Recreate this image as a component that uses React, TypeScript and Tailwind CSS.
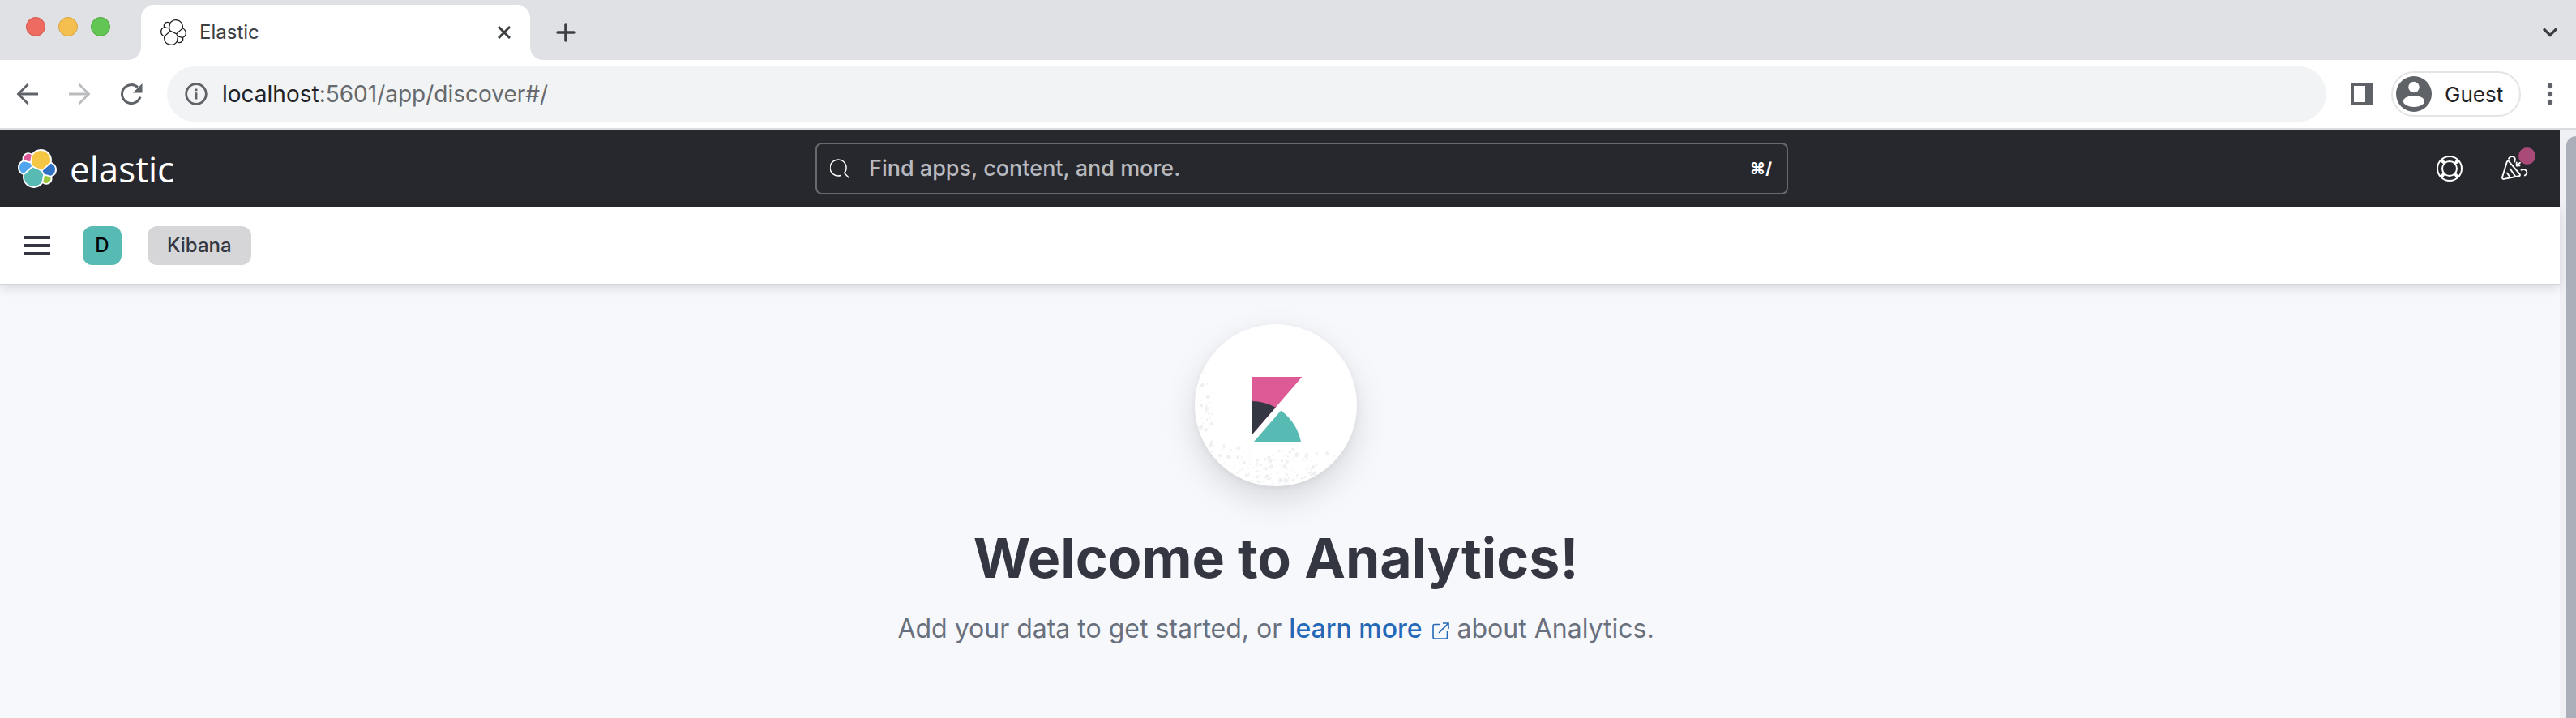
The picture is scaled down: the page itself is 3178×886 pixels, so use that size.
import React from "react";

type LogoProps = { className: string; mono?: boolean };

const LOGO_PARTS: { d: string; fill: string }[] = [
  { fill: "#f4c644", d: "M12.58 13.79l7 3.2 7.05-6.2c.1-.5.15-1.01.15-1.56a7.9 7.9 0 00-14.42-4.45l-1.17 6.1 1.39 2.91" },
  { fill: "#57bab3", d: "M5.33 21.18c-.1.51-.15 1.04-.15 1.58a7.93 7.93 0 0014.46 4.44l1.16-6.06-1.55-2.96-7.03-3.2-6.89 6.2" },
  { fill: "#de5a96", d: "M5.29 9.08l4.8 1.13 1.05-5.45a3.79 3.79 0 00-5.85 4.32" },
  { fill: "#51a5ed", d: "M4.87 10.22a5.3 5.3 0 00-.19 9.94l6.73-6.08-1.24-2.64-5.3-1.22" },
  { fill: "#9ac73c", d: "M20.87 27.2a3.78 3.78 0 005.84-4.31l-4.8-1.12-1.04 5.43" },
  { fill: "#3072c4", d: "M21.85 20.54l5.28 1.23a5.31 5.31 0 003.52-4.98 5.3 5.3 0 00-3.4-4.95l-6.9 6.05 1.5 2.65" },
];

function ElasticMark({ className, mono = false }: LogoProps) {
  return (
    <svg viewBox="0 0 32 32" className={className} aria-hidden="true">
      <path
        fill={mono ? "#1c1d21" : "#fff"}
        d="M32 16.77c0-2.68-1.66-5.03-4.17-5.95.11-.57.17-1.15.17-1.74C28 4.07 23.92 0 18.91 0c-2.94 0-5.66 1.4-7.38 3.77a4.83 4.83 0 00-2.96-1.01 4.84 4.84 0 00-4.55 6.48A6.37 6.37 0 000 15.2c0 2.7 1.67 5.06 4.2 5.98-.11.55-.16 1.12-.16 1.72 0 5 4.08 9.08 9.1 9.08 2.95 0 5.66-1.42 7.37-3.79a4.84 4.84 0 002.98 1.03 4.84 4.84 0 004.54-6.48A6.37 6.37 0 0032 16.77"
      />
      {LOGO_PARTS.map((part) => (
        <path key={part.fill} fill={mono ? "#fff" : part.fill} d={part.d} />
      ))}
    </svg>
  );
}

function KibanaMark() {
  return (
    <svg viewBox="0 0 32 32" className="relative size-20" aria-hidden="true">
      <path fill="#de5a96" d="M4 0v28.789L28.935.017z" />
      <path fill="#343741" d="M4 12v16.789l11.906-13.738A24.721 24.721 0 004 12" />
      <path fill="#57bab3" d="M18.479 16.664L6.268 30.754l-1.073 1.237h23.191c-1.252-6.292-4.883-11.719-9.908-15.327" />
    </svg>
  );
}

/* Light grain scattered along the left and lower rim of the badge. */
function makeSpeckles() {
  let seed = 41;
  const next = () => {
    seed = (seed * 16807) % 2147483647;
    return seed / 2147483647;
  };
  const dots: { x: number; y: number; rx: number; ry: number; tilt: number }[] = [];
  for (let i = 0; i < 3200; i++) {
    const x = next() * 200;
    const y = next() * 200;
    const size = next();
    const chance = next();
    const tilt = next() * 180;
    if (Math.hypot(x - 100, y - 100) > 99) continue;
    const left = x < 21 && y > 48 ? 0.1 + (y - 48) / 220 : 0;
    const bottom = y > 140 + (x > 60 ? 12 : 0) ? (y - 138) / 80 : 0;
    const fade = x > 150 ? 0.5 : 1;
    if (chance > Math.max(left, bottom) * fade) continue;
    const r = 0.6 + size * size * size * size * 1.9;
    dots.push({ x, y, rx: r * 1.2, ry: r, tilt });
  }
  return dots;
}

const SPECKLES = makeSpeckles();

function Speckles() {
  return (
    <svg viewBox="0 0 200 200" className="absolute inset-0 size-full" aria-hidden="true">
      {SPECKLES.map((s, i) => (
        <ellipse key={i} cx={s.x} cy={s.y} rx={s.rx} ry={s.ry} fill="#eff0f2" transform={`rotate(${s.tilt} ${s.x} ${s.y})`} />
      ))}
    </svg>
  );
}

function TabStrip() {
  return (
    <div className="flex h-[74px] items-end bg-[#dfe1e5]">
      <div className="flex h-full w-[158px] items-center gap-4 pb-2 pl-8">
        <span className="size-6 rounded-full border border-[#d35549] bg-[#ed6b60]" />
        <span className="size-6 rounded-full border border-[#d8a23c] bg-[#f5bf50]" />
        <span className="size-6 rounded-full border border-[#51a742] bg-[#62c655]" />
      </div>
      <span className="size-4 bg-white">
        <span className="block size-4 rounded-br-2xl bg-[#dfe1e5]" />
      </span>
      <div className="flex h-[68px] w-[480px] items-center rounded-t-2xl bg-white pl-6 pr-6">
        <ElasticMark mono className="size-8" />
        <span className="ml-4 flex-1 text-2xl text-[#3c4043]">Elastic</span>
        <button type="button" aria-label="Close tab">
          <svg viewBox="0 0 16 16" className="size-4" fill="none" stroke="#3c4043" strokeWidth="3">
            <path d="M1 1l14 14M15 1L1 15" />
          </svg>
        </button>
      </div>
      <span className="size-4 bg-white">
        <span className="block size-4 rounded-bl-2xl bg-[#dfe1e5]" />
      </span>
      <div className="flex h-[68px] flex-1 items-center justify-between pl-4 pr-[22px]">
        <button type="button" aria-label="New tab">
          <svg viewBox="0 0 24 24" className="size-6" fill="none" stroke="#3c4043" strokeWidth="3.6" strokeLinecap="round">
            <path d="M12 2v20M2 12h20" />
          </svg>
        </button>
        <button type="button" aria-label="Search tabs">
          <svg viewBox="0 0 20 12" className="h-3 w-5" fill="none" stroke="#3c4043" strokeWidth="3.2">
            <path d="M2 1.5l8 8 8-8" />
          </svg>
        </button>
      </div>
    </div>
  );
}

function Toolbar() {
  return (
    <div className="flex h-[86px] items-center border-b-2 border-[#dadce0] bg-white pl-5">
      <div className="flex w-[186px] items-center gap-9">
        <button type="button" aria-label="Back">
          <svg viewBox="0 0 28 28" className="size-7" fill="none" stroke="#5f6368" strokeWidth="2.8">
            <path d="M27 14H3M14.5 2L2.5 14l12 12" />
          </svg>
        </button>
        <button type="button" aria-label="Forward">
          <svg viewBox="0 0 28 28" className="size-7" fill="none" stroke="#babcbe" strokeWidth="2.8">
            <path d="M1 14h24M13.500 2l12 12-12 12" />
          </svg>
        </button>
        <button type="button" aria-label="Reload">
          <svg viewBox="0 0 28 28" className="size-7">
            <path d="M25 17.500A11.500 11.500 0 1 1 22 5.800" fill="none" stroke="#5f6368" strokeWidth="3" />
            <path d="M27.500 1v11.500H16z" fill="#5f6368" />
          </svg>
        </button>
      </div>
      <div className="flex h-[68px] flex-1 items-center rounded-full bg-[#f1f3f4] pl-[22px]">
        <svg viewBox="0 0 28 28" className="size-7" fill="none" stroke="#5f6368" strokeWidth="2.800">
          <circle cx="14" cy="14" r="12.300" />
          <path d="M14 12.200v8.300M14 7.500v2.800" />
        </svg>
        <p className="ml-[18px] text-[28px] text-[#66696d]">
          <span className="text-[#202124]">localhost</span>:5601/app/discover#/
        </p>
      </div>
      <button type="button" aria-label="Side panel" className="ml-[30px]">
        <svg viewBox="0 0 28 28" className="size-7">
          <path fill="#5f6368" fillRule="evenodd" d="M0 0h28v28H0zM4 4v20h14V4z" />
        </svg>
      </button>
      <button type="button" className="ml-[22px] flex h-14 w-40 items-center rounded-full border-2 border-[#e3e4e5] pl-1">
        <svg viewBox="0 0 44 44" className="size-11" aria-hidden="true">
          <circle cx="22" cy="22" r="22" fill="#5f6368" />
          <circle cx="22" cy="13.500" r="6.700" fill="#fff" />
          <ellipse cx="22" cy="31" rx="13" ry="7" fill="#fff" />
        </svg>
        <span className="ml-4 text-[26px] text-[#202124]">Guest</span>
      </button>
      <button type="button" aria-label="More" className="ml-8 mr-7">
        <svg viewBox="0 0 8 28" className="h-7 w-2" fill="#5f6368">
          <circle cx="4" cy="4" r="3.200" />
          <circle cx="4" cy="14" r="3.200" />
          <circle cx="4" cy="24" r="3.200" />
        </svg>
      </button>
    </div>
  );
}

function GlobalHeader() {
  return (
    <header className="flex h-24 items-center bg-[#27282e] pl-[22px] pr-10">
      <a href="#home" className="flex flex-1 items-center gap-4">
        <ElasticMark className="size-12" />
        <span className="font-['Open_Sans',sans-serif] text-[44px] leading-[60px] font-normal text-white">elastic</span>
      </a>
      <label className="ml-[72px] flex h-16 w-[1200px] items-center rounded-lg border-2 border-[#69696d] pl-4 pr-[18px]">
        <svg viewBox="0 0 24 24" className="size-6" fill="none" stroke="#fff" strokeWidth="1.500" aria-hidden="true">
          <path d="M13 20.500A10 10 0 1 1 17.600 17.500L23.500 23.500" />
        </svg>
        <input
          type="text"
          aria-label="Find apps, content, and more."
          placeholder="Find apps, content, and more."
          className="ml-6 min-w-0 flex-1 bg-transparent text-[27px] font-medium text-white outline-none placeholder:text-[#b8b9be]"
        />
        <kbd className="font-['Inter',sans-serif] text-xl font-bold text-white">⌘/</kbd>
      </label>
      <div className="flex flex-1 items-center justify-end gap-12">
        <button type="button" aria-label="Help">
          <svg viewBox="0 0 32 32" className="size-8" fill="none" stroke="#fff" strokeWidth="2">
            <circle cx="16" cy="16" r="15" />
            <circle cx="16" cy="16" r="9" />
            <circle cx="16" cy="16" r="12" strokeWidth="6" strokeDasharray="4 14.850" strokeDashoffset="-7.420" />
          </svg>
        </button>
        <button type="button" aria-label="What's new" className="relative">
          <svg viewBox="0 0 32 32" className="size-8 overflow-visible" fill="none" stroke="#fff" strokeWidth="1.900" strokeLinecap="round" strokeLinejoin="round">
            <path d="M6.800 7.800L1.100 26.500Q.5 29.200 3.200 28.900L21.500 25.300Q23.800 24.600 22.500 22.800L9.500 7.300Q7.800 5.800 6.800 7.800z" />
            <path d="M10.700 16.300l6.300 9M7 21.500l3.800 5.500" />
            <path d="M9 3.700Q11 .2 14.500 1.300T16.300 7.500" />
            <path d="M18.700 8.500v4l3.800-.2M19.500 11.800l3.500-3" />
            <path d="M24.500 17.700Q28.500 15.800 30.700 18.800T28.800 24.500" />
          </svg>
          <span className="absolute -right-[10px] -top-[10px] size-[21px] rounded-full bg-[#a94a78]" />
        </button>
      </div>
    </header>
  );
}

function Breadcrumbs() {
  return (
    <nav className="relative flex h-24 items-center border-b-2 border-[#d0d5e0] bg-white pl-[30px] shadow-[0_4px_12px_rgba(0,0,0,0.12)]">
      <button type="button" aria-label="Toggle navigation" className="flex w-8 flex-col gap-1.5">
        <span className="h-1 bg-[#343741]" />
        <span className="h-1 bg-[#343741]" />
        <span className="h-1 bg-[#343741]" />
      </button>
      <button type="button" className="ml-10 size-12 rounded-xl bg-[#57bab3] text-2xl font-medium text-black">
        D
      </button>
      <a href="#kibana" className="ml-8 flex h-12 items-center rounded-xl bg-[#d6d6d9] px-6 text-2xl font-medium text-[#343741]">
        Kibana
      </a>
    </nav>
  );
}

function Welcome() {
  return (
    <main className="flex flex-1 flex-col items-center pr-[10px] pt-12">
      <div className="relative flex size-[200px] items-center justify-center rounded-full bg-white pt-[10px] shadow-[0_2px_8px_rgba(0,0,0,0.05),0_16px_40px_rgba(0,0,0,0.13)]">
        <Speckles />
        <KibanaMark />
      </div>
      <h1 className="mt-12 text-[68px] leading-[80px] font-bold text-[#343741]">Welcome to Analytics!</h1>
      <p className="mt-7 text-[32px] leading-[40px] text-[#69707d]">
        Add your data to get started, or{" "}
        <a href="#learn-more" className="font-medium text-[#2468b8]">
          learn more
          <svg viewBox="0 0 24 24" className="ml-2.5 inline-block size-6 align-[-3px]" fill="none" stroke="currentColor" strokeWidth="1.600" aria-hidden="true">
            <path d="M11 4.500H5Q3 4.500 3 6.500V20q0 2 2 2h13.500q2 0 2-2v-7M15 3h7v7M22 3L10 15" />
          </svg>
        </a>{" "}
        about Analytics.
      </p>
    </main>
  );
}

export default function App() {
  return (
    <div className="flex min-h-screen flex-col bg-white font-['Inter',sans-serif]">
      <TabStrip />
      <Toolbar />
      <div className="flex flex-1">
        <div className="flex min-w-0 flex-1 flex-col bg-[#f7f8fc]">
          <GlobalHeader />
          <Breadcrumbs />
          <Welcome />
        </div>
        <div className="flex w-5 bg-[#eff0f4] pl-2 pt-2">
          <span className="flex-1 rounded-tl-xl bg-[#abafb9]" />
        </div>
      </div>
    </div>
  );
}
